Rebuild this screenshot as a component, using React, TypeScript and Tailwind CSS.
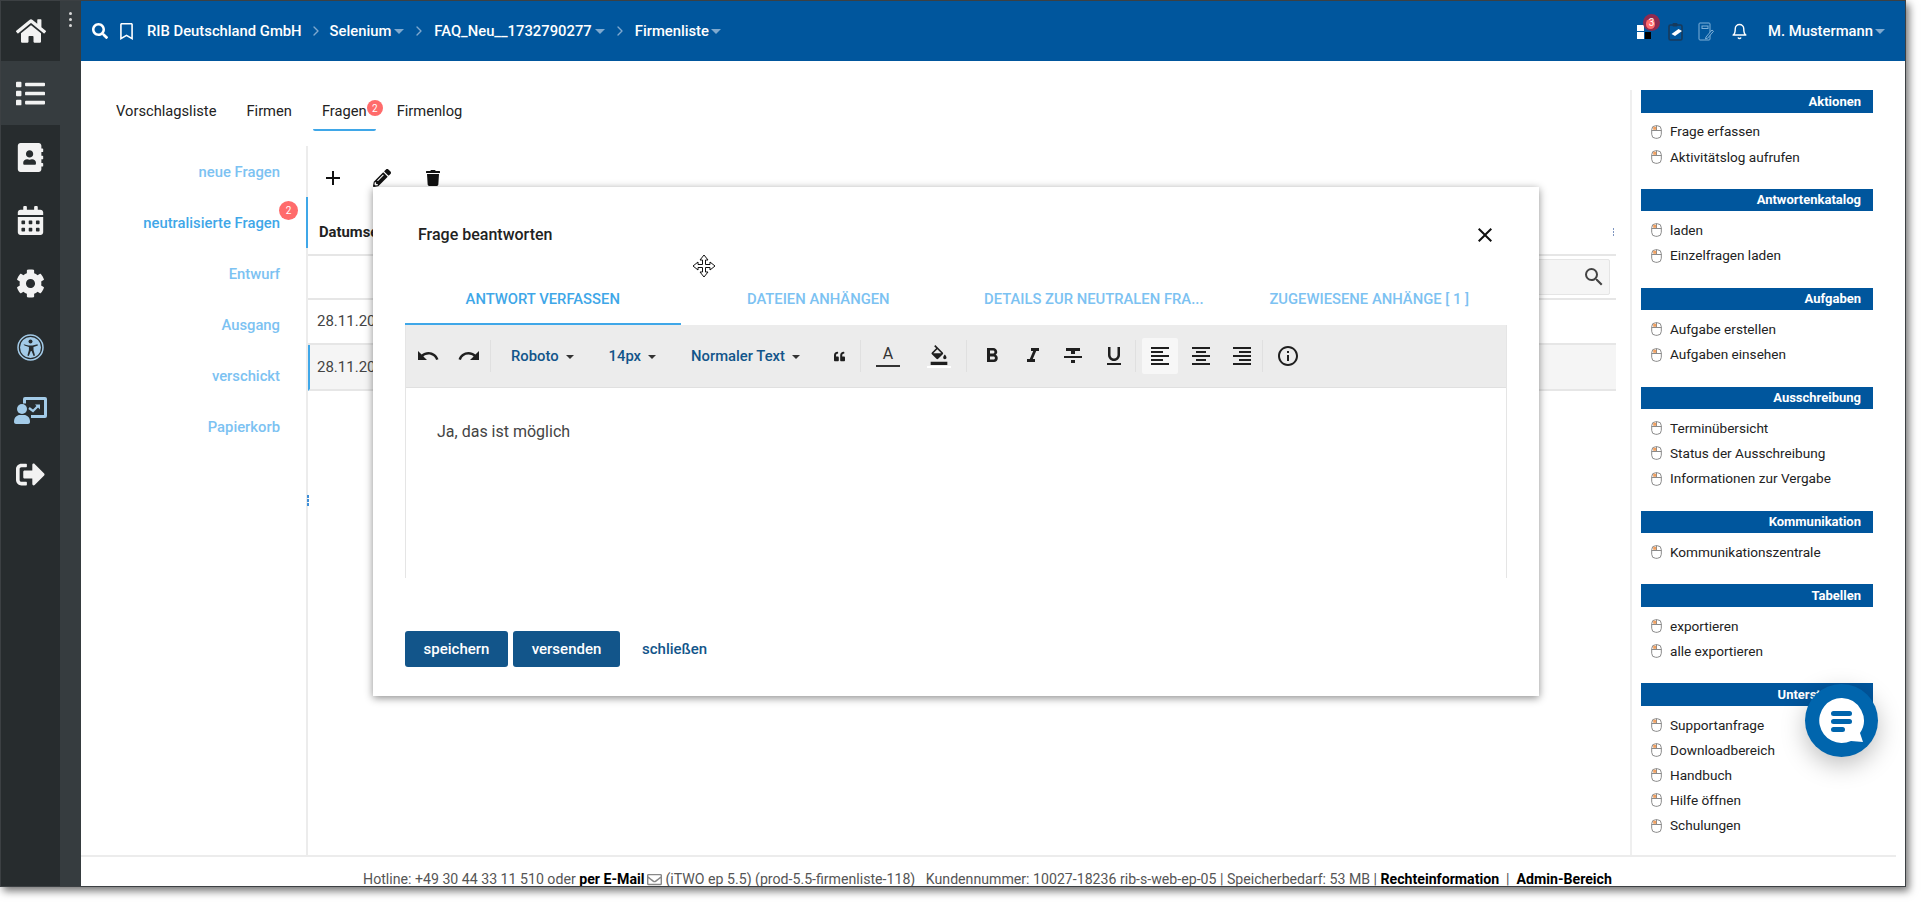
import React from "react";
import { FaHome, FaList, FaAddressBook, FaCalendarAlt, FaCog, FaSignOutAlt, FaSearch, FaRegBookmark, FaPencilAlt, FaTrash, FaQuoteLeft, FaRegEnvelope } from "react-icons/fa";
import { MdUndo, MdRedo, MdFormatColorFill, MdFormatBold, MdFormatItalic, MdFormatStrikethrough, MdFormatUnderlined, MdFormatAlignLeft, MdFormatAlignCenter, MdFormatAlignRight, MdInfoOutline, MdClose, MdAdd, MdSearch } from "react-icons/md";
import { FiChevronRight, FiBell } from "react-icons/fi";

const Caret = () => (
  <span className="inline-block w-0 h-0 border-x-[5px] border-x-transparent border-t-[5px] border-t-[#7fa9cf]" />
);

const SmallCaret = () => (
  <span className="inline-block w-0 h-0 border-x-[4px] border-x-transparent border-t-[4px] border-t-[#333] ml-[7px] mb-[2px]" />
);

const MouseIcon = () => (
  <svg width="11" height="14" viewBox="0 0 11 14" className="shrink-0">
    <rect x="0.7" y="0.7" width="9.6" height="12.6" rx="4" fill="#fff" stroke="#8a8a8a" strokeWidth="1" />
    <path d="M.7 5.500H10.300M5.500 .7V5.500" stroke="#8a8a8a" strokeWidth="1" fill="none" />
    <rect x="2.200" y="1.800" width="3" height="3" fill="#f0a060" />
  </svg>
);

const AccessIcon = () => (
  <svg width="27" height="27" viewBox="0 0 27 27">
    <circle cx="13.500" cy="13.500" r="12.500" fill="none" stroke="#a3cbe8" strokeWidth="1.500" />
    <circle cx="13.500" cy="13.500" r="10.500" fill="#a3cbe8" />
    <circle cx="13.500" cy="7.500" r="2" fill="#272c2e" />
    <path d="M6.500 10.200l5 1.300h4l5-1.300.4 1.400-4.400 1.400v3l1.500 5.500-1.400.4-2-5h-.8l-2 5-1.400-.4 1.500-5.500v-3l-4.400-1.400z" fill="#272c2e" />
  </svg>
);

const PresentIcon = () => (
  <svg width="33" height="27" viewBox="0 0 33 27">
    <path d="M9 2a2 2 0 0 1 2-2h20a2 2 0 0 1 2 2v17a2 2 0 0 1-2 2H17v-3h13V3H12v3.500H9z" fill="#a3cbe8" />
    <path d="M15 11l4 3 5-5" fill="none" stroke="#a3cbe8" strokeWidth="2.200" />
    <path d="M21 7.500h5v5z" fill="#a3cbe8" />
    <circle cx="8" cy="12" r="5" fill="#a3cbe8" />
    <path d="M0 25c0-5 3-7 6-7h4c3 0 6 2 6 7 0 1-1 2-2 2H2c-1 0-2-1-2-2z" fill="#a3cbe8" />
  </svg>
);

const sideItems: { node: React.ReactNode; h: string; active?: boolean }[] = [
  { node: <FaHome size={30} className="text-[#f2f2f2]" />, h: "h-[60px]" },
  { node: <FaList size={29} className="text-[#f2f2f2]" />, h: "h-[64px]", active: true },
  { node: <FaAddressBook size={29} className="text-[#f2f2f2]" />, h: "h-[64px]" },
  { node: <FaCalendarAlt size={29} className="text-[#f2f2f2]" />, h: "h-[63px]" },
  { node: <FaCog size={29} className="text-[#f2f2f2]" />, h: "h-[63px]" },
  { node: <AccessIcon />, h: "h-[64px]" },
  { node: <PresentIcon />, h: "h-[63px]" },
  { node: <FaSignOutAlt size={29} className="text-[#f2f2f2]" />, h: "h-[64px]" },
];

function Sidebar() {
  return (
    <div className="w-[80px] shrink-0 bg-[#363c3f] flex flex-col relative">
      <div className="absolute right-[9px] top-[11px] flex flex-col gap-[3px]">
        <span className="w-[3px] h-[3px] rounded-full bg-[#d8d8d8]" />
        <span className="w-[3px] h-[3px] rounded-full bg-[#d8d8d8]" />
        <span className="w-[3px] h-[3px] rounded-full bg-[#d8d8d8]" />
      </div>
      <div className="w-[59px] flex flex-col">
        {sideItems.map(({ node, h, active }, i) => (
          <div key={i} className={`${h} flex items-center justify-center ${active ? "w-[80px] pr-[21px] bg-[#363c3f]" : "bg-[#272c2e]"}`}>
            {node}
          </div>
        ))}
      </div>
      <div className="flex-1 w-[59px] bg-[#272c2e]" />
    </div>
  );
}

function Header() {
  return (
    <div className="h-[60px] shrink-0 bg-[#00569d] flex items-center text-white font-medium text-[14.8px] pl-[11px] pr-[20px]">
      <FaSearch size={16} className="text-white" />
      <FaRegBookmark size={17} className="text-white ml-[10px]" />
      <span className="ml-[12px]">RIB Deutschland GmbH</span>
      <FiChevronRight size={16} className="text-[#7fa9cf] mx-[6px]" />
      <span>Selenium</span>
      <span className="ml-[3px] flex"><Caret /></span>
      <FiChevronRight size={16} className="text-[#7fa9cf] mx-[7px]" />
      <span>FAQ_Neu__1732790277</span>
      <span className="ml-[3px] flex"><Caret /></span>
      <FiChevronRight size={16} className="text-[#7fa9cf] mx-[7px]" />
      <span>Firmenliste</span>
      <span className="ml-[2px] flex"><Caret /></span>
      <div className="ml-auto flex items-center">
        <div className="relative w-[14px] h-[14px] grid grid-cols-2 gap-[1px] mr-[17px] mt-[1px]">
          <span className="bg-white" />
          <span />
          <span className="bg-white" />
          <span className="bg-black" />
          <span className="absolute -top-[11px] left-[6px] w-[17px] h-[17px] rounded-full bg-[#8e2a50] flex items-center justify-center text-[10px] text-white font-normal leading-none">
            <span className="absolute w-[9px] h-[10px] rounded-full bg-[#ff6b6b] top-[5px] left-[3px]" />
            <span className="relative mt-[2px]">3</span>
          </span>
        </div>
        <svg width="15" height="19" viewBox="0 0 15 19" className="mr-[15px]">
          <rect x="1" y="3" width="13" height="15" rx="1.500" fill="none" stroke="#173a5c" strokeWidth="1.600" />
          <rect x="4.500" y="1" width="5" height="3.500" rx="1" fill="#173a5c" />
          <path d="M3.500 12l7-5 3.500 2-7 5z" fill="#fff" />
        </svg>
        <svg width="16" height="19" viewBox="0 0 16 19" className="mr-[17px]">
          <rect x="1" y="1" width="11" height="17" rx="1" fill="none" stroke="#7fb0d8" strokeWidth="1" />
          <rect x="4" y="4" width="6" height="2.500" fill="none" stroke="#7fb0d8" strokeWidth="1" />
          <path d="M8 15l6-7 1.500 1.300-6 7-2 .6z" fill="#00569d" stroke="#7fb0d8" strokeWidth="1" />
        </svg>
        <FiBell size={17} className="text-white mr-[20px]" />
        <span>M. Mustermann</span>
        <span className="ml-[2px] flex"><Caret /></span>
      </div>
    </div>
  );
}

function TopTabs() {
  return (
    <div className="flex items-start gap-[30px] pl-[35px] pt-[39px] h-[85px] text-[14.7px] text-[#222]">
      <span>Vorschlagsliste</span>
      <span>Firmen</span>
      <span className="relative px-[9px] -mx-[9px] pb-[7px] border-b-[2px] border-[#3fa7e8] rounded-b-[2px]">
        Fragen
        <span className="absolute left-[54px] top-[0px] w-[16px] h-[16px] rounded-full bg-[#ff6b6b] text-white text-[10px] flex items-center justify-center">2</span>
      </span>
      <span>Firmenlog</span>
    </div>
  );
}

const subItems = ["neue Fragen", "neutralisierte Fragen", "Entwurf", "Ausgang", "verschickt", "Papierkorb"];

function SubNav() {
  return (
    <div className="w-[227px] shrink-0 border-r-[2px] border-[#ececec] relative">
      {subItems.map((t, i) => (
        <div key={t} className={`h-[51px] flex items-center justify-end pr-[26px] pt-[2px] text-[14.8px] font-medium relative ${i === 1 ? "text-[#3fa7e8]" : "text-[#7cc2f2]"}`}>
          {t}
          {i === 1 && (
            <>
              <span className="absolute right-[8px] top-[4px] w-[19px] h-[19px] rounded-full bg-[#ff6b6b] text-white text-[10px] font-normal flex items-center justify-center">2</span>
              <span className="absolute -right-[2px] top-0 w-[2px] h-[51px] bg-[#3fa7e8]" />
            </>
          )}
        </div>
      ))}
      <div className="absolute -right-[3px] top-[349px] flex flex-col gap-[1px]">
        <span className="w-[2px] h-[3px] bg-[#3f8fd8]" />
        <span className="w-[2px] h-[3px] bg-[#3f8fd8]" />
        <span className="w-[2px] h-[3px] bg-[#3f8fd8]" />
      </div>
    </div>
  );
}

function TableArea() {
  return (
    <div className="flex-1 flex flex-col text-[#222]">
      <div className="h-[64px] flex items-start pt-[20px] pl-[13px]">
        <MdAdd size={24} className="text-[#111]" />
        <FaPencilAlt size={18} className="text-[#111] mt-[3px] ml-[28px]" />
        <FaTrash size={16} className="text-[#111] mt-[4px] ml-[34px]" />
      </div>
      <div className="h-[46px] border-b-[2px] border-[#e6e6e6] flex items-center pl-[11px] pr-[2px] justify-between font-bold text-[14.8px]">
        <span>Datumsende</span>
        <span className="flex flex-col gap-[1px]">
          <span className="w-[1px] h-[2px] bg-[#7f96c0]" />
          <span className="w-[1px] h-[2px] bg-[#7f96c0]" />
          <span className="w-[1px] h-[2px] bg-[#7f96c0]" />
        </span>
      </div>
      <div className="h-[44px] border-b-[2px] border-[#e6e6e6] flex items-center pr-[6px] justify-end">
        <div className="w-[200px] h-[36px] bg-[#f5f5f5] border border-[#e5e5e5] rounded-[2px] flex items-center justify-end pr-[3px]">
          <MdSearch size={24} className="text-[#444]" />
        </div>
      </div>
      <div className="h-[45px] border-b-[2px] border-[#e6e6e6] flex items-center pl-[9px] text-[15px] text-[#444]">28.11.2024</div>
      <div className="h-[46px] border-b-[2px] border-[#e6e6e6] border-l-[2px] border-l-[#3fa7e8] bg-[#f5f5f5] flex items-center pl-[7px] text-[15px] text-[#444]">28.11.2024</div>
    </div>
  );
}

const sections: { title: string; items: string[] }[] = [
  { title: "Aktionen", items: ["Frage erfassen", "Aktivitätslog aufrufen"] },
  { title: "Antwortenkatalog", items: ["laden", "Einzelfragen laden"] },
  { title: "Aufgaben", items: ["Aufgabe erstellen", "Aufgaben einsehen"] },
  { title: "Ausschreibung", items: ["Terminübersicht", "Status der Ausschreibung", "Informationen zur Vergabe"] },
  { title: "Kommunikation", items: ["Kommunikationszentrale"] },
  { title: "Tabellen", items: ["exportieren", "alle exportieren"] },
  { title: "Unterstützung", items: ["Supportanfrage", "Downloadbereich", "Handbuch", "Hilfe öffnen", "Schulungen"] },
];

function RightPanel() {
  return (
    <div className="w-[275px] shrink-0 mt-[29px] border-l-[2px] border-[#efefef] pl-[9px] pr-[32px]">
      {sections.map((s) => (
        <div key={s.title} className="mb-[19.500px]">
          <div className="h-[22.500px] bg-[#00569d] text-white font-bold text-[13px] flex items-center justify-end pr-[12px]">{s.title}</div>
          <div className="mt-[6.500px] flex flex-col">
            {s.items.map((it) => (
              <div key={it} className="h-[25.200px] flex items-center pl-[10px] gap-[8px] text-[13.6px] text-[#222]">
                <MouseIcon />
                <span>{it}</span>
              </div>
            ))}
          </div>
        </div>
      ))}
    </div>
  );
}

const Sep = ({ cls = "" }: { cls?: string }) => <span className={`w-[1px] h-[32px] bg-[#e0e0e0] ${cls}`} />;

function EditorToolbar() {
  return (
    <div className="h-[63px] bg-[#ececec] border-b border-[#e0e0e0] flex items-center text-[#1f1f1f]">
      <MdUndo size={24} className="ml-[10px]" />
      <MdRedo size={24} className="ml-[17px]" />
      <Sep cls="ml-[9px]" />
      <span className="ml-[20px] text-[14.8px] font-medium text-[#12558a]">Roboto<SmallCaret /></span>
      <span className="ml-[35px] text-[14.8px] font-medium text-[#12558a]">14px<SmallCaret /></span>
      <span className="ml-[35px] text-[14.8px] font-medium text-[#12558a]">Normaler Text<SmallCaret /></span>
      <FaQuoteLeft size={11} className="ml-[34px]" />
      <Sep cls="ml-[15px]" />
      <span className="ml-[15px] flex flex-col items-center w-[24px]">
        <span className="text-[16px] leading-[18px] text-[#333]">A</span>
        <span className="w-[24px] h-[2px] bg-[#333] mt-[2px]" />
      </span>
      <span className="ml-[27px] flex flex-col items-center w-[24px]">
        <MdFormatColorFill size={20} />
        <span className="w-[24px] h-[2px] bg-white mt-[1px]" />
      </span>
      <Sep cls="ml-[15px]" />
      <MdFormatBold size={24} className="ml-[13px]" />
      <MdFormatItalic size={24} className="ml-[17px]" />
      <MdFormatStrikethrough size={24} className="ml-[16px]" />
      <MdFormatUnderlined size={24} className="ml-[17px]" />
      <Sep cls="ml-[9px]" />
      <span className="ml-[6px] w-[36px] h-[36px] bg-[#f7f7f7] rounded-[2px] flex items-center justify-center">
        <MdFormatAlignLeft size={24} />
      </span>
      <MdFormatAlignCenter size={24} className="ml-[11px]" />
      <MdFormatAlignRight size={24} className="ml-[17px]" />
      <Sep cls="ml-[8px]" />
      <MdInfoOutline size={24} className="ml-[13px]" />
    </div>
  );
}

function Modal() {
  const tabs = ["ANTWORT VERFASSEN", "DATEIEN ANHÄNGEN", "DETAILS ZUR NEUTRALEN FRA...", "ZUGEWIESENE ANHÄNGE [ 1 ]"];
  return (
    <div className="absolute left-[373px] top-[187px] w-[1166px] h-[509px] bg-white shadow-[0_2px_8px_rgba(0,0,0,0.45)] px-[32px] flex flex-col z-10">
      <div className="h-[96px] flex items-start pt-[36px] pl-[13px] pr-[10px] justify-between">
        <span className="text-[16px] font-medium text-[#222]">Frage beantworten</span>
        <MdClose size={24} className="text-[#111]" />
      </div>
      <div className="grid grid-cols-4 h-[42px]">
        {tabs.map((t, i) => (
          <div key={t} className={`flex items-center justify-center text-[14.8px] font-medium pb-[8px] ${i === 0 ? "text-[#3fa7e8] border-b-[2px] border-[#3fa7e8]" : "text-[#7cc2f2] border-b-[2px] border-transparent"}`}>{t}</div>
        ))}
      </div>
      <div className="h-[253px] border-x border-[#e5e5e5] flex flex-col">
        <EditorToolbar />
        <div className="pl-[31px] pt-[34px] text-[16px] leading-[20px] text-[#444]">Ja, das ist möglich</div>
      </div>
      <div className="mt-[53px] flex items-center">
        <button className="w-[103px] h-[36px] bg-[#12558a] rounded-[3px] text-white text-[15px] font-medium">speichern</button>
        <button className="ml-[5px] w-[107px] h-[36px] bg-[#12558a] rounded-[3px] text-white text-[15px] font-medium">versenden</button>
        <span className="ml-[22px] text-[15px] font-medium text-[#12558a]">schließen</span>
      </div>
    </div>
  );
}

function MoveCursor() {
  return (
    <svg width="24" height="24" viewBox="0 0 24 24" className="absolute left-[692px] top-[254px] z-20">
      <path d="M12 1l4 5h-2.500v4.500H18V8l5 4-5 4v-2.500h-4.500V18H16l-4 5-4-5h2.500v-4.500H6V16l-5-4 5-4v2.500h4.500V6H8z" fill="#fff" stroke="#111" strokeWidth="1" />
    </svg>
  );
}

function ChatBubble() {
  return (
    <div className="absolute left-[1805px] top-[684px] w-[73px] h-[73px] rounded-full bg-[#0065ad] shadow-[0_8px_24px_rgba(0,0,0,0.25)] flex items-center justify-center z-20">
      <svg width="46" height="46" viewBox="0 0 46 46">
        <path d="M23 0a22.500 22.500 0 1 0 9 43l12 1-3-9A22.500 22.500 0 0 0 23 0z" fill="#fff" />
        <rect x="12" y="13" width="21" height="5" rx="2.500" fill="#0065ad" />
        <rect x="12" y="21" width="21" height="5" rx="2.500" fill="#0065ad" />
        <rect x="12" y="29" width="14" height="5" rx="2.500" fill="#0065ad" />
      </svg>
    </div>
  );
}

function Footer() {
  return (
    <div className="mr-[9px] h-[31px] shrink-0 border-t-[2px] border-[#ececec] flex items-start justify-center text-[14.150px] text-[#555] pt-[13px] whitespace-pre leading-[19px] overflow-hidden pr-[2px]">
      <span>Hotline: +49 30 44 33 11 510 oder </span>
      <span className="font-bold text-black">per E-Mail</span>
      <FaRegEnvelope size={15} className="text-[#888] mx-[3px] mt-[2px]" />
      <span>(iTWO ep 5.5) (prod-5.5-firmenliste-118)   Kundennummer: 10027-18236 rib-s-web-ep-05 | Speicherbedarf: 53 MB | </span>
      <span className="font-bold text-black">Rechteinformation</span>
      <span>  |  </span>
      <span className="font-bold text-black">Admin-Bereich</span>
    </div>
  );
}

export default function App() {
  return (
    <div className="w-[1921px] h-[902px] bg-white relative overflow-hidden" style={{ fontFamily: "Roboto, 'Liberation Sans', sans-serif" }}>
      <div className="w-[1906px] h-[887px] border border-[#3c4043] bg-white flex shadow-[3px_4px_8px_rgba(0,0,0,0.55)]">
        <Sidebar />
        <div className="flex-1 flex flex-col min-w-0">
          <Header />
          <div className="flex-1 flex min-h-0">
            <div className="flex-1 flex flex-col min-w-0 mr-[14px]">
              <TopTabs />
              <div className="flex-1 flex min-h-0">
                <SubNav />
                <TableArea />
              </div>
            </div>
            <RightPanel />
          </div>
          <Footer />
        </div>
      </div>
      <Modal />
      <MoveCursor />
      <ChatBubble />
    </div>
  );
}
